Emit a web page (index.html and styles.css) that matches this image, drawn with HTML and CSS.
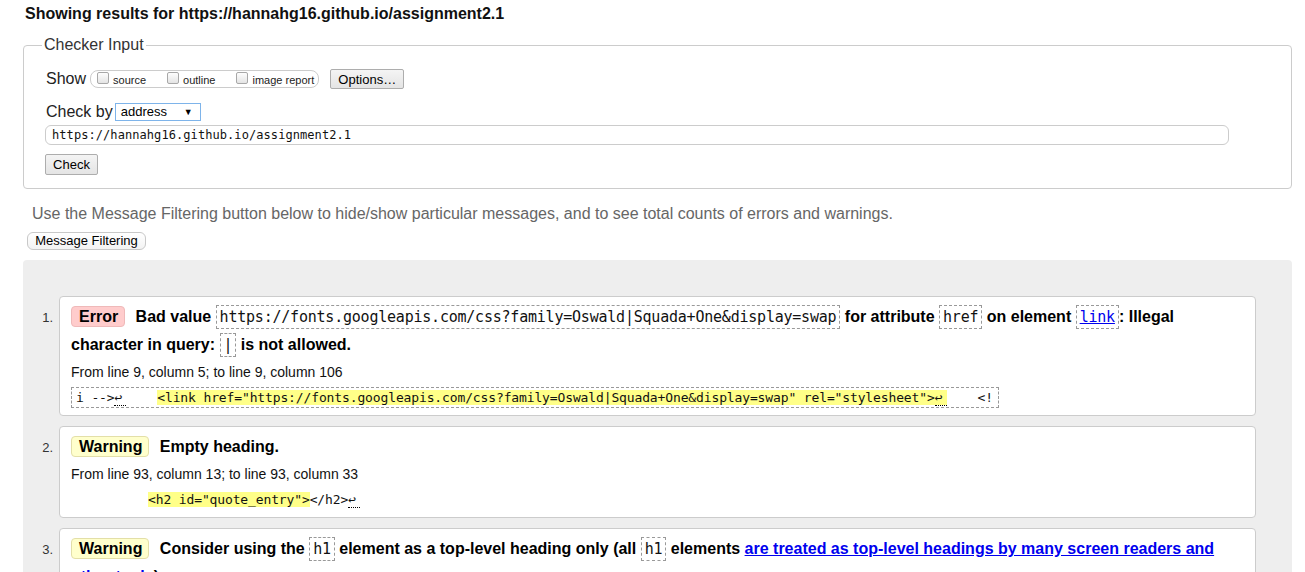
FILE: index.html
```html
<!DOCTYPE html>
<html lang="en">
<head>
<meta charset="utf-8">
<title>Showing results for https://hannahg16.github.io/assignment2.1 - Nu Html Checker</title>
<link rel="stylesheet" href="styles.css">
</head>
<body>
<h2 class="results-title">Showing results for https://hannahg16.github.io/assignment2.1</h2>
<form class="checker">
  <fieldset class="checker-input">
    <legend>Checker Input</legend>
    <div class="show-row">
      <span class="row-label">Show</span>
      <span class="opts">
        <label class="opt"><input type="checkbox" class="cb"><span>source</span></label>
        <label class="opt"><input type="checkbox" class="cb"><span>outline</span></label>
        <label class="opt"><input type="checkbox" class="cb"><span>image report</span></label>
      </span>
      <button type="button" class="btn opts-btn">Options…</button>
    </div>
    <div class="checkby-row">
      <span class="row-label">Check by</span>
      <span class="select"><span>address</span><span class="arrow">▼</span></span>
    </div>
    <div class="url-input">https://hannahg16.github.io/assignment2.1</div>
    <button type="button" class="btn check-btn">Check</button>
  </fieldset>
</form>
<p class="filter-note">Use the Message Filtering button below to hide/show particular messages, and to see total counts of errors and warnings.</p>
<button type="button" class="filter-btn">Message Filtering</button>
<div class="results">
  <ol class="messages">
    <li class="msg">
      <span class="num">1.</span>
      <div class="msg-box">
        <p class="msg-text"><strong class="badge error">Error</strong> Bad value <code class="ic">https://fonts.googleapis.com/css?family=Oswald|Squada+One&amp;display=swap</code> for attribute <code class="ic">href</code> on element <code class="ic"><a href="#">link</a></code>: Illegal<br>character in query: <code class="ic">|</code> is not allowed.</p>
        <p class="location">From line 9, column 5; to line 9, column 106</p>
        <p class="extract"><code>i --&gt;<b class="lf">↩</b>    <mark>&lt;link href="https://fonts.googleapis.com/css?family=Oswald|Squada+One&amp;display=swap" rel="stylesheet"&gt;<b class="lf">↩</b></mark>    &lt;!</code></p>
      </div>
    </li>
    <li class="msg">
      <span class="num">2.</span>
      <div class="msg-box">
        <p class="msg-text"><strong class="badge warning">Warning</strong> Empty heading.</p>
        <p class="location">From line 93, column 13; to line 93, column 33</p>
        <p class="extract plain"><code><mark>&lt;h2 id="quote_entry"&gt;</mark>&lt;/h2&gt;<b class="lf">↩</b></code></p>
      </div>
    </li>
    <li class="msg">
      <span class="num">3.</span>
      <div class="msg-box">
        <p class="msg-text"><strong class="badge warning">Warning</strong> Consider using the <code class="ic">h1</code> element as a top-level heading only (all <code class="ic">h1</code> elements <a href="#">are treated as top-level headings by many screen readers and<br>other tools</a>).</p>
      </div>
    </li>
  </ol>
</div>
</body>
</html>
```

FILE: styles.css
```css
* { box-sizing: border-box; }
html { overflow: hidden; }
html, body { margin: 0; background: #fff; }
body {
  font-family: "Liberation Sans", Arial, sans-serif;
  font-size: 16px;
  color: #000;
  padding: 0 13px 0 23px;
}

.results-title {
  font-size: 16px;
  font-weight: bold;
  line-height: 20px;
  margin: 4px 0 0 2px;
  color: #111;
}

.checker { margin: 0; }
.checker-input {
  margin: 12px 0 0;
  padding: 0 22px 13px 22px;
  border: 1px solid #ccc;
  border-radius: 4px;
  min-width: 0;
}
.checker-input legend {
  font-size: 16px;
  line-height: 18px;
  color: #333;
  padding: 0 2px;
  margin-left: -4px;
}

.row-label { font-size: 16px; line-height: 20px; color: #222; }

.show-row {
  display: flex;
  align-items: center;
  height: 20px;
  margin-top: 15px;
}
.opts {
  display: flex;
  align-items: flex-start;
  height: 18px;
  margin-left: 4px;
  padding: 0 4px 0 6px;
  border: 1px solid #ccc;
  border-radius: 8px;
}
.opt {
  display: flex;
  align-items: flex-start;
  font-size: 11px;
  color: #222;
}
.opt span { margin-top: 2px; line-height: 14px; }
.opt + .opt { margin-left: 21px; }
.cb {
  appearance: none;
  -webkit-appearance: none;
  width: 12px;
  height: 12px;
  margin: 1px 4px 0 0;
  border: 1px solid #a8a8a8;
  border-radius: 2px;
  background: linear-gradient(#fdfdfd, #e4e4e4);
}

.btn {
  display: block;
  font-family: "Liberation Sans", Arial, sans-serif;
  font-size: 13px;
  color: #000;
  padding: 0;
  background: linear-gradient(#f4f4f4, #e4e4e4);
  border: 1px solid #adadad;
  border-radius: 2px;
  text-align: center;
}
.opts-btn { width: 74px; height: 20px; margin-left: 11px; }

.checkby-row {
  display: flex;
  align-items: center;
  height: 18px;
  margin-top: 14px;
}
.checkby-row .row-label { line-height: 18px; }
.select {
  display: flex;
  align-items: center;
  justify-content: space-between;
  width: 86px;
  height: 18px;
  margin-left: 2px;
  padding: 0 7px 0 5px;
  border: 1px solid #7eb4ea;
  background: #fff;
  font-size: 13px;
  line-height: 16px;
}
.select .arrow { font-size: 9px; }

.url-input {
  width: 1184px;
  height: 20px;
  margin: 4px 0 0 -1px;
  padding: 0 6px;
  border: 1px solid #ccc;
  border-radius: 6px;
  font-family: "DejaVu Sans Mono", monospace;
  font-size: 12px;
  letter-spacing: 0.07px;
  line-height: 18px;
  color: #111;
}
.check-btn { width: 53px; height: 21px; margin: 9px 0 0 -1px; }

.filter-note {
  margin: 15px 0 0 9px;
  font-size: 16px;
  line-height: 20px;
  color: #666;
}
.filter-btn {
  display: block;
  width: 119px;
  height: 18px;
  margin: 8px 0 0 4px;
  padding: 0;
  font-family: "Liberation Sans", Arial, sans-serif;
  font-size: 13px;
  line-height: 16px;
  color: #000;
  background: linear-gradient(#fff, #f3f3f3);
  border: 1px solid #c8c8c8;
  border-radius: 6px;
}

.results {
  margin-top: 10px;
  background: #eee;
  border-radius: 4px 4px 0 0;
  padding: 36px 36px 60px 0;
}
.messages { list-style: none; margin: 0; padding: 0; }
.msg {
  display: flex;
  align-items: flex-start;
  margin-bottom: 10px;
}
.num {
  flex: none;
  width: 36px;
  padding: 14px 6px 0 0;
  text-align: right;
  font-size: 13px;
  line-height: 16px;
  color: #333;
}
.msg-box {
  flex: 1;
  min-width: 0;
  background: #fff;
  border: 1px solid #ccc;
  border-radius: 4px;
  padding: 6px 11px 7px 11px;
}
.msg-text {
  margin: 0;
  font-weight: bold;
  line-height: 28px;
}
.msg-text a { color: #00e; }
.badge {
  display: inline-block;
  height: 21px;
  line-height: 19px;
  padding: 0 6px 0 7px;
  margin-right: 6px;
  border: 1px solid;
  border-radius: 4px;
}
.badge.error { background: #fcc; border-color: #efb9b9; }
.badge.warning { background: #ffc; border-color: #e3dfa8; }

.ic {
  display: inline-block;
  font-family: "DejaVu Sans Mono", monospace;
  font-size: 15px;
  letter-spacing: -0.22px;
  font-weight: normal;
  line-height: 22px;
  padding: 0 3px;
  border: 1px dashed #999;
  color: #111;
}
.ic a { color: #00e; }

.location {
  margin: 4px 0 0;
  font-size: 14px;
  line-height: 18px;
  color: #111;
}
.extract { margin: 6px 0 0; }
.extract code {
  display: inline-block;
  white-space: pre;
  font-family: "DejaVu Sans Mono", monospace;
  font-size: 13px;
  letter-spacing: -0.13px;
  line-height: 19px;
  padding: 0 5px 0 4px;
  border: 1px dashed #999;
  color: #111;
}
.extract.plain code { border-color: transparent; padding-left: 76px; }
.extract mark { background: #ff8; color: inherit; padding: 0; }
.lf {
  display: inline-block;
  width: 12px;
  line-height: 14px;
  font-weight: normal;
  letter-spacing: 0;
  border-bottom: 1px dotted #000;
}
```
